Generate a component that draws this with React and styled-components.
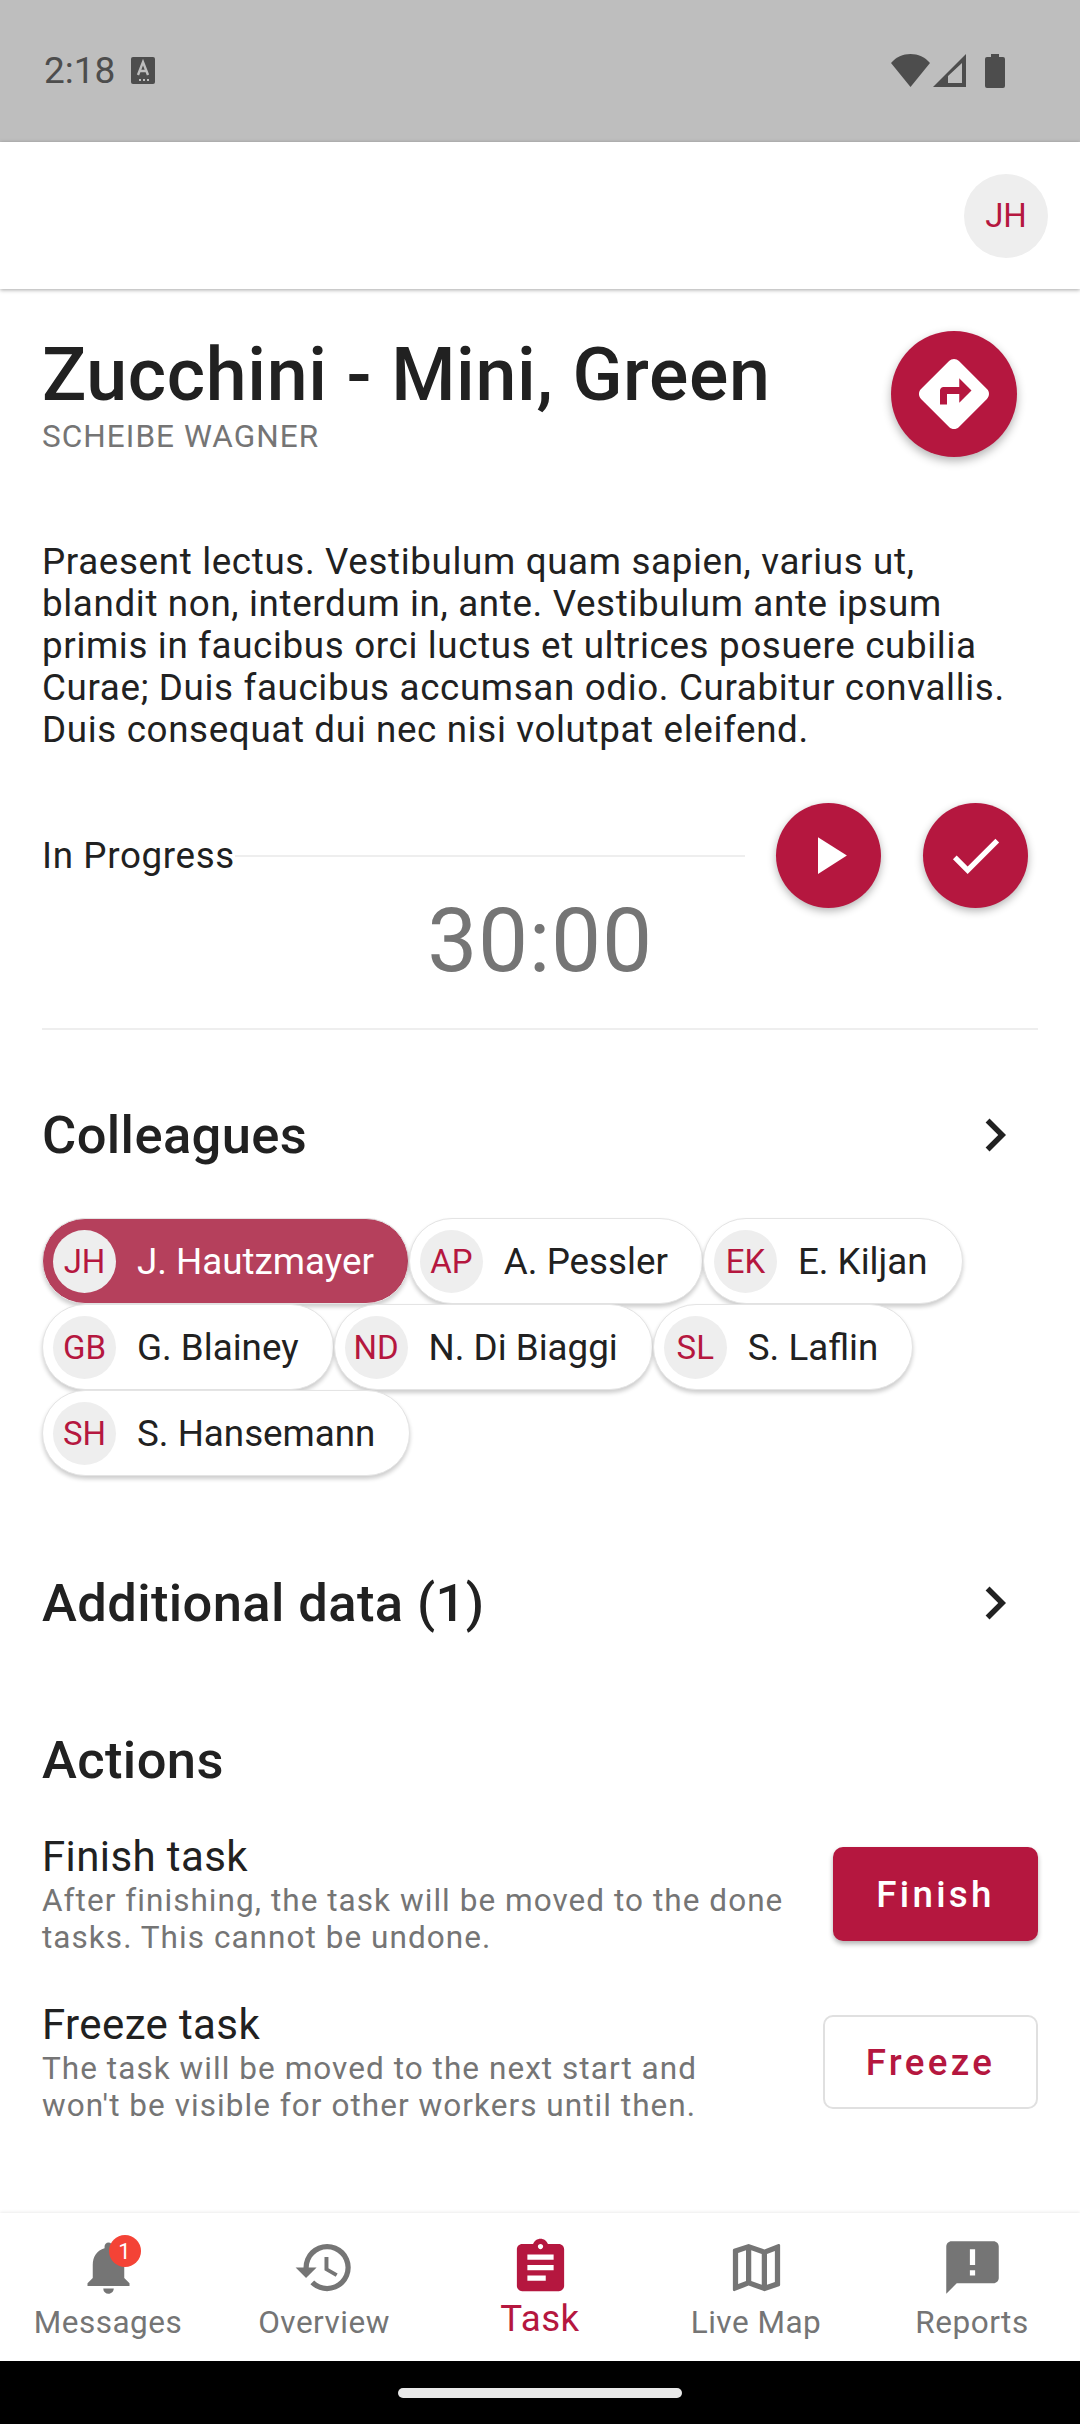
import React from "react";
import styled, { createGlobalStyle } from "styled-components";
import {
  MdDirections,
  MdPlayArrow,
  MdCheck,
  MdChevronRight,
  MdNotifications,
  MdHistory,
  MdAssignment,
  MdOutlineMap,
  MdAnnouncement,
} from "react-icons/md";

const RED = "#b5173f";

const GlobalStyle = createGlobalStyle`
  html, body {
    margin: 0;
    padding: 0;
    background: #fff;
  }
  * {
    box-sizing: border-box;
  }
  body {
    font-family: Roboto, "Noto Sans", sans-serif;
    color: #212121;
  }
`;

const colleagues = [
  ["JH", "J. Hautzmayer", true],
  ["AP", "A. Pessler"],
  ["EK", "E. Kiljan"],
  ["GB", "G. Blainey"],
  ["ND", "N. Di Biaggi"],
  ["SL", "S. Laflin"],
  ["SH", "S. Hansemann"],
];

function App() {
  return (
    <Page>
      <GlobalStyle />
      <StatusBar>
        <StatusLeft>
          <Clock>2:18</Clock>
          <svg width="24" height="27" viewBox="0 0 24 27">
            <rect width="24" height="27" rx="2" fill="#4d4d4d" />
            <path d="M7 18 L12 5 L17 18 M9 14 H15" stroke="#bebebe" strokeWidth="2.4" fill="none" />
            <path d="M8 23h2M12 23h2M16 23h2" stroke="#bebebe" strokeWidth="2" />
          </svg>
        </StatusLeft>
        <StatusRight>
          <svg width="39" height="33" viewBox="0 0 39 33">
            <path d="M19.5 33 L0 9 C5 3 12 0 19.5 0 C27 0 34 3 39 9 Z" fill="#4d4d4d" />
          </svg>
          <svg width="33" height="33" viewBox="0 0 33 33">
            <path d="M33 0 V33 H0 Z M29 9 L15 22 V29 H29 Z" fill="#4d4d4d" fillRule="evenodd" />
          </svg>
          <BatteryIcon width="20" height="34" viewBox="0 0 20 34">
            <path d="M6 0 H14 V3 H18 Q20 3 20 5 V32 Q20 34 18 34 H2 Q0 34 0 32 V5 Q0 3 2 3 H6 Z" fill="#4d4d4d" />
          </BatteryIcon>
        </StatusRight>
      </StatusBar>

      <AppBar>
        <UserAvatar>JH</UserAvatar>
      </AppBar>

      <Content>
        <TitleRow>
          <TitleBlock>
            <Title>Zucchini - Mini, Green</Title>
            <Customer>SCHEIBE WAGNER</Customer>
          </TitleBlock>
          <DirectionsButton>
            <MdDirections size={84} color="#fff" />
          </DirectionsButton>
        </TitleRow>

        <Description>
          Praesent lectus. Vestibulum quam sapien, varius ut, blandit non,
          interdum in, ante. Vestibulum ante ipsum primis in faucibus orci
          luctus et ultrices posuere cubilia Curae; Duis faucibus accumsan
          odio. Curabitur convallis. Duis consequat dui nec nisi volutpat
          eleifend.
        </Description>

        <StateRow>
          <StateLabel>In Progress</StateLabel>
          <StateLine />
          <RoundButton>
            <MdPlayArrow size={63} color="#fff" />
          </RoundButton>
          <RoundButton $last>
            <MdCheck size={63} color="#fff" />
          </RoundButton>
        </StateRow>
        <Timer>30:00</Timer>
        <Divider />

        <SectionHeader $top={74}>
          <SectionTitle>Colleagues</SectionTitle>
          <MdChevronRight size={66} color="#212121" />
        </SectionHeader>
        <Chips>
          {colleagues.map(([initials, name, selected]) => (
            <Chip key={initials} $selected={selected}>
              <ChipAvatar>{initials}</ChipAvatar>
              <ChipName>{name}</ChipName>
            </Chip>
          ))}
        </Chips>

        <SectionHeader $top={96}>
          <SectionTitle>Additional data (1)</SectionTitle>
          <MdChevronRight size={66} color="#212121" />
        </SectionHeader>

        <ActionsTitle>Actions</ActionsTitle>
        <ActionRow>
          <ActionText>
            <ActionName>Finish task</ActionName>
            <ActionHint>
              After finishing, the task will be moved to the done tasks. This
              cannot be undone.
            </ActionHint>
          </ActionText>
          <FinishButton>Finish</FinishButton>
        </ActionRow>
        <ActionRow $second>
          <ActionText>
            <ActionName>Freeze task</ActionName>
            <ActionHint>
              The task will be moved to the next start and won't be visible
              for other workers until then.
            </ActionHint>
          </ActionText>
          <FreezeButton>Freeze</FreezeButton>
        </ActionRow>
      </Content>

      <BottomNav>
        <NavItem>
          <NavIcon>
            <MdNotifications size={63} />
            <Badge>1</Badge>
          </NavIcon>
          <NavLabel>Messages</NavLabel>
        </NavItem>
        <NavItem>
          <NavIcon>
            <MdHistory size={63} />
          </NavIcon>
          <NavLabel>Overview</NavLabel>
        </NavItem>
        <NavItem $active>
          <NavIcon>
            <MdAssignment size={63} />
          </NavIcon>
          <NavLabel $active>Task</NavLabel>
        </NavItem>
        <NavItem>
          <NavIcon>
            <MdOutlineMap size={63} />
          </NavIcon>
          <NavLabel>Live Map</NavLabel>
        </NavItem>
        <NavItem>
          <NavIcon>
            <MdAnnouncement size={63} />
          </NavIcon>
          <NavLabel>Reports</NavLabel>
        </NavItem>
      </BottomNav>

      <SystemBar>
        <HomePill />
      </SystemBar>
    </Page>
  );
}

const Page = styled.div`
  width: 1080px;
  height: 2424px;
  display: flex;
  flex-direction: column;
  overflow: hidden;
  background: #fff;
`;

const StatusBar = styled.div`
  height: 142px;
  flex-shrink: 0;
  background: #bebebe;
  display: flex;
  justify-content: space-between;
  align-items: flex-start;
  padding: 54px 75px 0 44px;
`;

const StatusLeft = styled.div`
  display: flex;
  align-items: center;
  gap: 16px;
  height: 33px;
`;

const Clock = styled.span`
  font-size: 37px;
  color: #4d4d4d;
`;

const StatusRight = styled.div`
  display: flex;
  align-items: flex-start;
  gap: 3px;
`;

const BatteryIcon = styled.svg`
  margin-left: 16px;
`;

const AppBar = styled.div`
  height: 147px;
  flex-shrink: 0;
  display: flex;
  justify-content: flex-end;
  align-items: center;
  padding-right: 32px;
  background: #fff;
  box-shadow: 0 1px 4px rgba(0, 0, 0, 0.35);
  position: relative;
`;

const UserAvatar = styled.div`
  width: 84px;
  height: 84px;
  border-radius: 50%;
  background: #eeeeee;
  color: ${RED};
  font-size: 33px;
  display: flex;
  align-items: center;
  justify-content: center;
`;

const Content = styled.main`
  flex: 1;
  min-height: 0;
  overflow: hidden;
  padding: 42px 42px 0;
`;

const TitleRow = styled.div`
  display: flex;
  justify-content: space-between;
  align-items: flex-start;
  padding-right: 21px;
`;

const TitleBlock = styled.div`
  padding-top: 2px;
`;

const Title = styled.h1`
  margin: 0;
  font-size: 73.5px;
  line-height: 84px;
  font-weight: 500;
  letter-spacing: 0.65px;
  color: #212121;
`;

const Customer = styled.div`
  font-size: 31.5px;
  line-height: 34px;
  margin-top: 3px;
  letter-spacing: 1.05px;
  color: #757575;
`;

const DirectionsButton = styled.div`
  width: 126px;
  height: 126px;
  border-radius: 50%;
  background: ${RED};
  display: flex;
  align-items: center;
  justify-content: center;
  box-shadow: 0 4px 10px rgba(0, 0, 0, 0.3);
`;

const Description = styled.p`
  margin: 84px 0 0;
  font-size: 36.75px;
  line-height: 42px;
  letter-spacing: 0.65px;
  color: #212121;
`;

const StateRow = styled.div`
  display: flex;
  align-items: center;
  margin-top: 52px;
  padding-right: 10px;
`;

const StateLabel = styled.span`
  font-size: 36.75px;
  letter-spacing: 0.65px;
  color: #212121;
`;

const StateLine = styled.div`
  flex: 1;
  height: 2px;
  background: #eeeeee;
`;

const RoundButton = styled.div`
  width: 105px;
  height: 105px;
  border-radius: 50%;
  background: ${RED};
  display: flex;
  align-items: center;
  justify-content: center;
  box-shadow: 0 3px 8px rgba(0, 0, 0, 0.3);
  margin-left: ${(p) => (p.$last ? "42px" : "31px")};
`;

const Timer = styled.div`
  text-align: center;
  font-size: 89.25px;
  line-height: 98px;
  letter-spacing: 0.65px;
  color: #757575;
  margin-top: -16px;
`;

const Divider = styled.div`
  height: 2px;
  background: #eeeeee;
  margin-top: 38px;
`;

const SectionHeader = styled.div`
  display: flex;
  justify-content: space-between;
  align-items: center;
  height: 62px;
  margin-top: ${(p) => p.$top}px;
  padding-right: 10px;
`;

const SectionTitle = styled.h2`
  margin: 0;
  font-size: 52.5px;
  line-height: 62px;
  font-weight: 500;
  letter-spacing: 0.39px;
  color: #212121;
`;

const Chips = styled.div`
  display: flex;
  flex-wrap: wrap;
  margin-top: 52px;
`;

const Chip = styled.div`
  height: 86px;
  display: flex;
  align-items: center;
  padding: 0 34px 0 10px;
  border-radius: 43px;
  background: ${(p) => (p.$selected ? "#b5405c" : "#fff")};
  color: ${(p) => (p.$selected ? "#fff" : "#212121")};
  border: 1px solid #e4e4e4;
  box-shadow: 0 3px 4px rgba(0, 0, 0, 0.2);
`;

const ChipAvatar = styled.div`
  width: 63px;
  height: 63px;
  border-radius: 50%;
  background: #eeeeee;
  color: ${RED};
  font-size: 33px;
  display: flex;
  align-items: center;
  justify-content: center;
`;

const ChipName = styled.span`
  margin-left: 21px;
  font-size: 36.75px;
`;

const ActionsTitle = styled.h2`
  margin: 95px 0 0;
  font-size: 52.5px;
  line-height: 62px;
  font-weight: 500;
  letter-spacing: 0.39px;
  color: #212121;
`;

const ActionRow = styled.div`
  display: flex;
  align-items: flex-start;
  gap: 45px;
  margin-top: ${(p) => (p.$second ? "47px" : "44px")};
`;

const ActionText = styled.div`
  flex: 1;
  min-width: 0;
`;

const ActionName = styled.div`
  font-size: 42px;
  line-height: 44px;
  letter-spacing: 0.39px;
  color: #212121;
`;

const ActionHint = styled.div`
  font-size: 31.5px;
  line-height: 37px;
  margin-top: 3px;
  letter-spacing: 1.05px;
  color: #757575;
`;

const FinishButton = styled.div`
  width: 205px;
  height: 94px;
  flex-shrink: 0;
  margin-top: 12px;
  border-radius: 10px;
  background: ${RED};
  color: #fff;
  font-size: 36.75px;
  font-weight: 500;
  letter-spacing: 3.3px;
  display: flex;
  align-items: center;
  justify-content: center;
  box-shadow: 0 3px 5px rgba(0, 0, 0, 0.3);
`;

const FreezeButton = styled.div`
  width: 215px;
  height: 94px;
  flex-shrink: 0;
  margin-top: 12px;
  border-radius: 10px;
  border: 2px solid #e0e0e0;
  background: #fff;
  color: ${RED};
  font-size: 36.75px;
  font-weight: 500;
  letter-spacing: 3.3px;
  display: flex;
  align-items: center;
  justify-content: center;
`;

const BottomNav = styled.nav`
  height: 148px;
  flex-shrink: 0;
  display: grid;
  grid-template-columns: repeat(5, 216px);
  background: #fff;
  box-shadow: 0 -1px 3px rgba(0, 0, 0, 0.08);
  position: relative;
`;

const NavItem = styled.div`
  display: flex;
  flex-direction: column;
  align-items: center;
  padding-top: 23px;
  color: ${(p) => (p.$active ? RED : "#757575")};
`;

const NavIcon = styled.div`
  position: relative;
  width: 63px;
  height: 63px;
`;

const Badge = styled.span`
  position: absolute;
  top: -1px;
  right: -1px;
  width: 32px;
  height: 32px;
  border-radius: 50%;
  background: #f44336;
  color: #fff;
  font-size: 22px;
  display: flex;
  align-items: center;
  justify-content: center;
`;

const NavLabel = styled.span`
  font-size: ${(p) => (p.$active ? "36.75px" : "31.5px")};
  line-height: 40px;
  margin-top: ${(p) => (p.$active ? "0" : "4px")};
  letter-spacing: 0.5px;
`;

const SystemBar = styled.div`
  height: 63px;
  flex-shrink: 0;
  background: #000;
  display: flex;
  justify-content: center;
  padding-top: 27px;
`;

const HomePill = styled.div`
  width: 284px;
  height: 10px;
  border-radius: 5px;
  background: #e8e8e8;
`;

export default App;
